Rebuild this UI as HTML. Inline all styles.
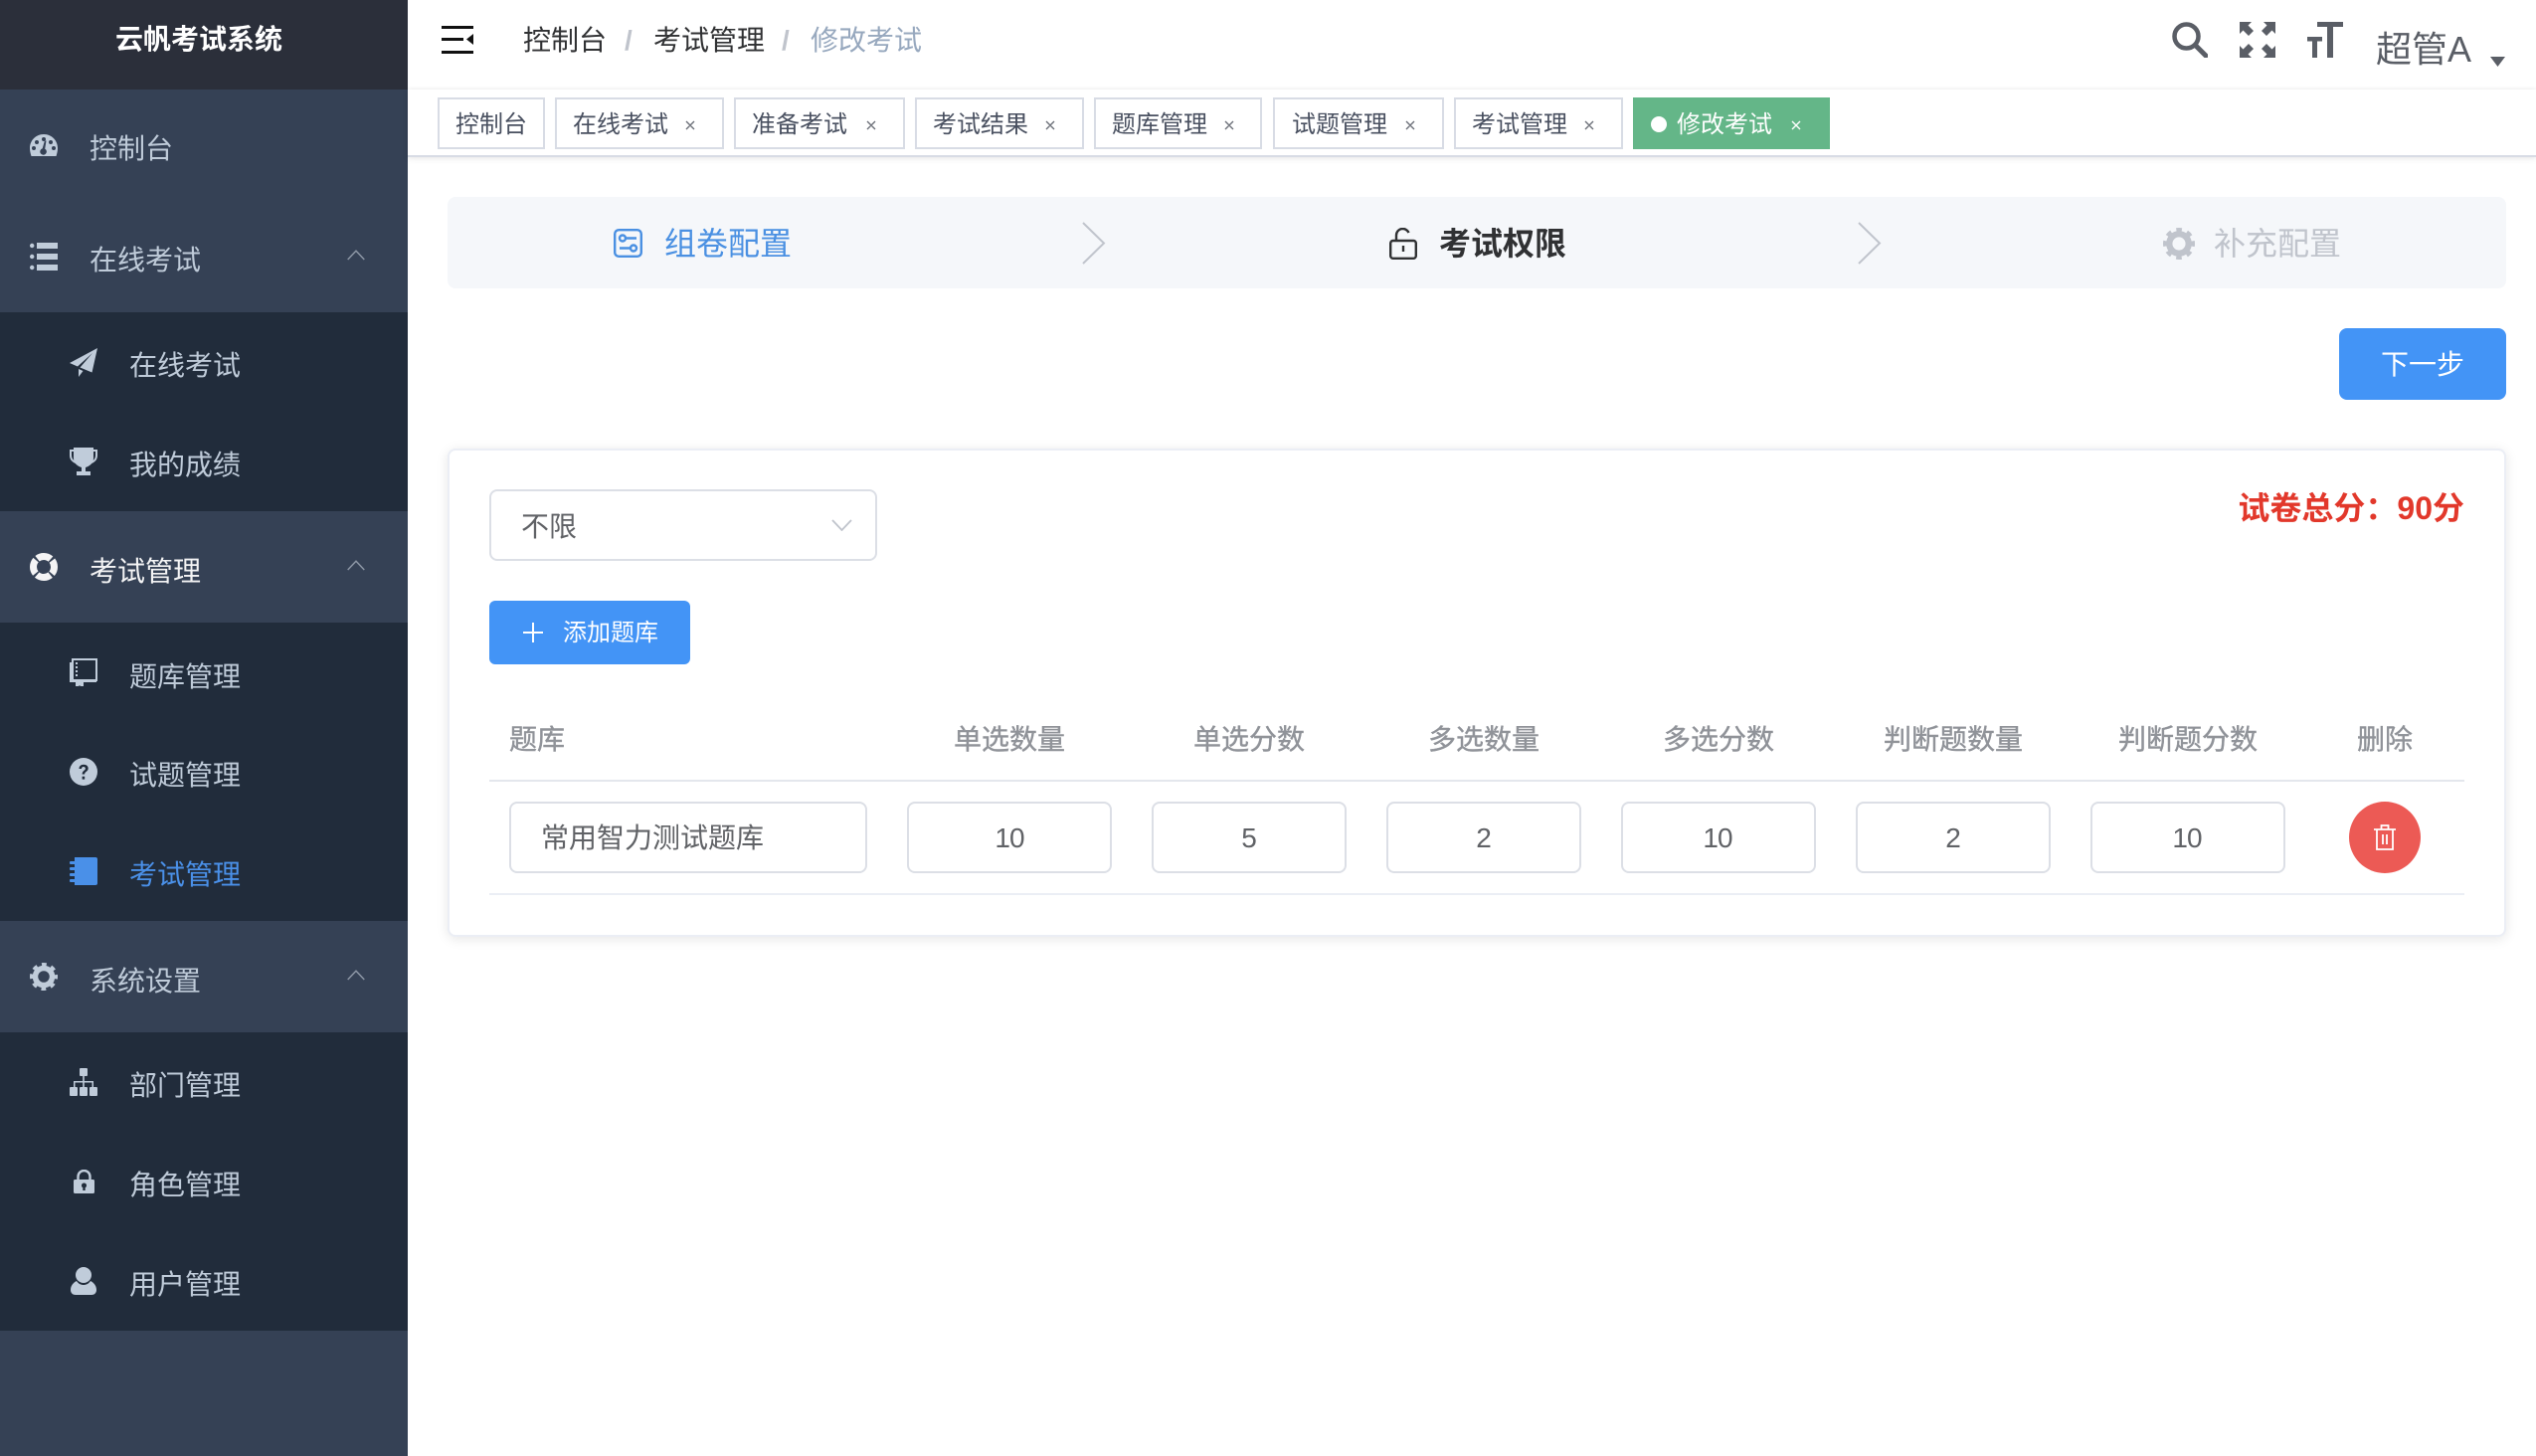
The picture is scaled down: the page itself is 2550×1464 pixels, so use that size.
<!DOCTYPE html>
<html lang="zh-CN"><head><meta charset="utf-8"><title>修改考试</title>
<style>
html,body{margin:0;padding:0;width:2550px;height:1464px;overflow:hidden;background:#fff}
body{position:relative;font-family:"Liberation Sans","Noto Sans CJK SC",sans-serif;color:#606266}
div,span,svg{position:absolute;box-sizing:border-box}
.t{white-space:nowrap;line-height:40px;height:40px;font-size:28px;margin-top:2px}
.c{transform:translateX(-50%)}
.s{color:#bfcbd9}
.tag{top:98px;height:52px;border:2px solid #d8dce5;background:#fff}
.tt{top:108px;font-size:24px;color:#495060;line-height:36px;height:36px;white-space:nowrap}
.inp{top:806px;height:72px;border:2px solid #dcdfe6;border-radius:8px;background:#fff}
.th{top:722px;color:#909399;-webkit-text-stroke:.4px #909399}
.v{top:821px;color:#606266}
</style></head><body>

<!-- sidebar -->
<div style="left:0;top:0;width:410px;height:1464px;background:#354155"></div>
<div style="left:0;top:0;width:410px;height:90px;background:#2b2f3a"></div>
<div style="left:0;top:314px;width:410px;height:200px;background:#212c3b"></div>
<div style="left:0;top:626px;width:410px;height:300px;background:#212c3b"></div>
<div style="left:0;top:1038px;width:410px;height:300px;background:#212c3b"></div>
<div class="t c" style="left:200px;top:18px;color:#fff;font-weight:700">云帆考试系统</div>

<svg style="left:30px;top:135px" width="28" height="22" viewBox="0 0 28 22"><path fill="#c0ccda" fill-rule="evenodd" d="M14 0C6 0 0 6.300 0 14c0 3 .8 5.800 1.500 8h25c.7-2.200 1.500-5 1.500-8C28 6.300 22 0 14 0zM14 3a2 2 0 1 1 0 4 2 2 0 0 1 0-4zM7 6a2 2 0 1 1 0 4 2 2 0 0 1 0-4zM21 6a2 2 0 1 1 0 4 2 2 0 0 1 0-4zM4 12a2 2 0 1 1 0 4 2 2 0 0 1 0-4zM24 12a2 2 0 1 1 0 4 2 2 0 0 1 0-4zM16.500 6.500l-1.300 8.100a3.300 3.300 0 1 1-2.500-.3l2.300-8.100z"/></svg>
<div class="t s" style="left:90px;top:128px">控制台</div>

<svg style="left:30px;top:244px" width="28" height="28" viewBox="0 0 28 28" fill="#c0ccda"><circle cx="2.200" cy="3" r="2.200"/><circle cx="2.200" cy="14" r="2.200"/><circle cx="2.200" cy="25" r="2.200"/><rect x="7" y="0" width="21" height="6"/><rect x="7" y="11" width="21" height="6"/><rect x="7" y="22" width="21" height="6"/></svg>
<div class="t s" style="left:90px;top:240px">在线考试</div>
<svg style="left:349px;top:251px" width="18" height="11" viewBox="0 0 18 11"><path d="M.7 10L9 1.200 17.300 10" fill="none" stroke="#8b95a4" stroke-width="1.500"/></svg>

<svg style="left:70px;top:350px" width="28" height="29" viewBox="0 0 28 29" fill="#c0ccda"><path d="M28 0L0 15l8 3.500L23 5 10.500 19.500l12 5z"/><path d="M9 21l0 8 4.500-6z"/></svg>
<div class="t s" style="left:130px;top:346px">在线考试</div>

<svg style="left:70px;top:450px" width="28" height="28" viewBox="0 0 28 28" fill="#c0ccda"><path d="M4 0h20v11c0 5-4.500 8-8 9v4h5v4H7v-4h5v-4C8.500 19 4 16 4 11z"/><path d="M4 3H1v5c0 4 3 6.500 6 7.500" fill="none" stroke="#c0ccda" stroke-width="2"/><path d="M24 3h3v5c0 4-3 6.500-6 7.500" fill="none" stroke="#c0ccda" stroke-width="2"/></svg>
<div class="t s" style="left:130px;top:446px">我的成绩</div>

<svg style="left:30px;top:556px" width="28" height="28" viewBox="0 0 28 28"><circle cx="14" cy="14" r="10.500" fill="none" stroke="#f4f4f5" stroke-width="7" stroke-dasharray="14.500 2" stroke-dashoffset="7.250"/></svg>
<div class="t" style="left:90px;top:553px;color:#f4f4f5">考试管理</div>
<svg style="left:349px;top:563px" width="18" height="11" viewBox="0 0 18 11"><path d="M.7 10L9 1.200 17.300 10" fill="none" stroke="#8b95a4" stroke-width="1.500"/></svg>

<svg style="left:70px;top:662px" width="28" height="28" viewBox="0 0 28 28" fill="none" stroke="#c0ccda" stroke-width="2"><path d="M3 21V1h24v21H3a2 2 0 0 0-2 2c0-1 0-2 0-20"/><path d="M1 23h26" /><path d="M7 4v14" stroke-dasharray="2 2"/><path d="M7 23v5l3-2 3 2v-5z" fill="#c0ccda"/></svg>
<div class="t s" style="left:130px;top:659px">题库管理</div>

<svg style="left:70px;top:762px" width="28" height="28" viewBox="0 0 28 28"><circle cx="14" cy="14" r="14" fill="#c0ccda"/><path d="M9.500 11c0-2.800 2-4.300 4.600-4.300 2.700 0 4.600 1.500 4.600 3.800 0 3.400-3.600 3.300-3.600 6h-2.500c0-3.700 3.300-3.800 3.300-5.800 0-1-.8-1.700-1.900-1.700-1.200 0-2 .8-2 2z" fill="#212c3b"/><rect x="12.600" y="18.700" width="2.600" height="2.900" fill="#212c3b"/></svg>
<div class="t s" style="left:130px;top:758px">试题管理</div>

<svg style="left:70px;top:862px" width="28" height="28" viewBox="0 0 28 28" fill="#4a90e8"><path d="M5 0h21a2 2 0 0 1 2 2v24a2 2 0 0 1-2 2H5z"/><rect x="0" y="4" width="7" height="3" rx="1"/><rect x="0" y="10" width="7" height="3" rx="1"/><rect x="0" y="16" width="7" height="3" rx="1"/><rect x="0" y="22" width="7" height="3" rx="1"/></svg>
<div class="t" style="left:130px;top:858px;color:#4a90e8">考试管理</div>

<svg style="left:30px;top:968px" width="28" height="28" viewBox="0 0 28 28"><circle cx="14" cy="14" r="8.500" fill="none" stroke="#c0ccda" stroke-width="5.500"/><circle cx="14" cy="14" r="12" fill="none" stroke="#c0ccda" stroke-width="4" stroke-dasharray="4.700 4.725" stroke-dashoffset="2.350"/></svg>
<div class="t s" style="left:90px;top:965px">系统设置</div>
<svg style="left:349px;top:975px" width="18" height="11" viewBox="0 0 18 11"><path d="M.7 10L9 1.200 17.300 10" fill="none" stroke="#8b95a4" stroke-width="1.500"/></svg>

<svg style="left:70px;top:1074px" width="28" height="28" viewBox="0 0 28 28" fill="#c0ccda"><rect x="10" y="0" width="8" height="8" rx="1"/><rect x="0" y="19" width="8" height="9" rx="1"/><rect x="10" y="19" width="8" height="9" rx="1"/><rect x="20" y="19" width="8" height="9" rx="1"/><path d="M13.200 8h1.600v5H24v6h-1.500v-4.500H5.500V19H4v-6h9.200zM13.200 14h1.600v5h-1.600z"/></svg>
<div class="t s" style="left:130px;top:1070px">部门管理</div>

<svg style="left:74px;top:1176px" width="21" height="24" viewBox="0 0 21 24"><path d="M4.500 11V7a6 6 0 0 1 12 0v4" fill="none" stroke="#c0ccda" stroke-width="2.400"/><path fill="#c0ccda" fill-rule="evenodd" d="M1.500 10h18A1.500 1.500 0 0 1 21 11.500v11a1.500 1.500 0 0 1-1.500 1.500h-18A1.500 1.500 0 0 1 0 22.500v-11A1.500 1.500 0 0 1 1.500 10zM10.500 13.500a2.500 2.500 0 0 0-1.200 4.700V21h2.400v-2.800a2.500 2.500 0 0 0-1.200-4.700z"/></svg>
<div class="t s" style="left:130px;top:1170px">角色管理</div>

<svg style="left:71px;top:1274px" width="26" height="28" viewBox="0 0 26 28" fill="#c0ccda"><ellipse cx="13" cy="8" rx="8" ry="8"/><path d="M6 14c2 3 4.500 4 7 4s5-1 7-4c3 1.500 6 4.500 6 9 0 3-2 5-5 5H5c-3 0-5-2-5-5 0-4.500 3-7.500 6-9z"/></svg>
<div class="t s" style="left:130px;top:1270px">用户管理</div>

<!-- navbar -->
<svg style="left:444px;top:26px" width="32" height="28" viewBox="0 0 32 28" fill="#111"><rect x="0" y="0" width="32" height="3"/><rect x="0" y="12" width="22" height="3"/><rect x="0" y="25" width="32" height="3"/><path d="M32 8v11l-7-5.500z"/></svg>
<div class="t" style="left:526px;top:19px;color:#303133">控制台</div>
<div class="t" style="left:628px;top:19px;color:#c0c4cc;font-weight:700">/</div>
<div class="t" style="left:657px;top:19px;color:#303133">考试管理</div>
<div class="t" style="left:786px;top:19px;color:#c0c4cc;font-weight:700">/</div>
<div class="t" style="left:815px;top:19px;color:#97a8be">修改考试</div>

<svg style="left:2184px;top:22px" width="36" height="36" viewBox="0 0 36 36" fill="none" stroke="#5a5e66"><circle cx="14.500" cy="14.500" r="12" stroke-width="4.500"/><path d="M23.500 23.500L34 34" stroke-width="5" stroke-linecap="round"/></svg>
<svg style="left:2252px;top:22px" width="36" height="36" viewBox="0 0 36 36" fill="#5a5e66"><path d="M0 0h12L8.500 3.500 14 9l-5 5-5.500-5.500L0 12zM36 0H24l3.500 3.500L22 9l5 5 5.500-5.500L36 12zM0 36h12l-3.500-3.500L14 27l-5-5-5.500 5.500L0 24zM36 36H24l3.500-3.500L22 27l5-5 5.500 5.500L36 24z"/></svg>
<svg style="left:2320px;top:22px" width="36" height="36" viewBox="0 0 36 36" fill="#5a5e66"><path d="M10 0h26v5h-10v31h-6V5H10zM0 15h15v4.500h-5V36H5V19.500H0z"/></svg>
<div class="t" style="left:2389px;top:26px;height:44px;line-height:44px;font-size:36px;color:#5a5e66">超管A</div>
<svg style="left:2504px;top:57px" width="15" height="10" viewBox="0 0 15 10"><path d="M0 0h15L7.500 10z" fill="#5a5e66"/></svg>

<!-- tags bar -->
<div style="left:410px;top:90px;width:2140px;height:68px;background:#fff;border-bottom:2px solid #d8dce5;box-shadow:0 2px 6px rgba(0,0,0,.08),0 -1px 4px rgba(0,0,0,.05)"></div>
<div class="tag" style="left:440px;width:108px"></div><div class="tt" style="left:458px">控制台</div>
<div class="tag" style="left:558px;width:170px"></div><div class="tt" style="left:576px">在线考试</div>
<div class="tag" style="left:738px;width:172px"></div><div class="tt" style="left:756px">准备考试</div>
<div class="tag" style="left:920px;width:170px"></div><div class="tt" style="left:938px">考试结果</div>
<div class="tag" style="left:1100px;width:169px"></div><div class="tt" style="left:1118px">题库管理</div>
<div class="tag" style="left:1280px;width:172px"></div><div class="tt" style="left:1299px">试题管理</div>
<div class="tag" style="left:1462px;width:170px"></div><div class="tt" style="left:1480px">考试管理</div>
<div class="tag" style="left:1642px;width:198px;background:#64b688;border-color:#64b688"></div>
<div style="left:1660px;top:117px;width:16px;height:16px;border-radius:50%;background:#fff"></div>
<div class="tt" style="left:1686px;color:#fff">修改考试</div>
<svg style="left:0;top:0" width="2550" height="160" viewBox="0 0 2550 160" fill="none" stroke-width="1.400"><g stroke="#6b6f78"><path d="M690 122l8 8M698 122l-8 8M872 122l8 8M880 122l-8 8M1052 122l8 8M1060 122l-8 8M1232 122l8 8M1240 122l-8 8M1414 122l8 8M1422 122l-8 8M1594 122l8 8M1602 122l-8 8"/></g><path stroke="#fff" d="M1802 122l8 8M1810 122l-8 8"/></svg>

<!-- steps -->
<div style="left:450px;top:198px;width:2070px;height:92px;background:#f5f7fa;border-radius:8px"></div>
<svg style="left:617px;top:230px" width="29" height="29" viewBox="0 0 29 29" fill="none" stroke="#4a90e2" stroke-width="2.400"><rect x="1.200" y="1.200" width="26.600" height="26.600" rx="4"/><circle cx="9" cy="9.500" r="3"/><path d="M12 9.500h11M6 19.500h11"/><circle cx="20" cy="19.500" r="3"/></svg>
<div class="t" style="left:668px;top:223px;font-size:32px;color:#4a90e2">组卷配置</div>
<svg style="left:1088px;top:223px" width="24" height="43" viewBox="0 0 24 43"><path d="M1 1l21 20.500L1 42" fill="none" stroke="#c0c4cc" stroke-width="2"/></svg>
<svg style="left:1397px;top:229px" width="28" height="32" viewBox="0 0 28 32" fill="none" stroke="#303133" stroke-width="2.400"><path d="M7 13V7.500A6.500 6.500 0 0 1 19.500 5"/><rect x="1.200" y="13" width="25.600" height="17.800" rx="2.500"/><path d="M14 18v6"/></svg>
<div class="t" style="left:1447px;top:223px;font-size:32px;font-weight:700;color:#303133">考试权限</div>
<svg style="left:1868px;top:223px" width="24" height="43" viewBox="0 0 24 43"><path d="M1 1l21 20.500L1 42" fill="none" stroke="#c0c4cc" stroke-width="2"/></svg>
<svg style="left:2175px;top:229px" width="32" height="32" viewBox="0 0 28 28"><circle cx="14" cy="14" r="8.500" fill="none" stroke="#c0c4cc" stroke-width="5.500"/><circle cx="14" cy="14" r="12" fill="none" stroke="#c0c4cc" stroke-width="4" stroke-dasharray="4.700 4.725" stroke-dashoffset="2.350"/></svg>
<div class="t" style="left:2226px;top:223px;font-size:32px;color:#c0c4cc">补充配置</div>

<!-- next -->
<div style="left:2352px;top:330px;width:168px;height:72px;background:#4394f6;border-radius:8px"></div>
<div class="t c" style="left:2436px;top:345px;color:#fff">下一步</div>

<!-- card -->
<div style="left:450px;top:451px;width:2070px;height:491px;border:2px solid #ebeef5;border-radius:8px;background:#fff;box-shadow:0 2px 12px rgba(0,0,0,.1)"></div>

<div class="inp" style="left:492px;top:492px;width:390px;height:72px"></div>
<div class="t" style="left:524px;top:508px">不限</div>
<svg style="left:836px;top:522px" width="21" height="12" viewBox="0 0 21 12"><path d="M1 1l9.500 10L20 1" fill="none" stroke="#c0c4cc" stroke-width="1.800"/></svg>

<div style="left:492px;top:604px;width:202px;height:64px;background:#4394f6;border-radius:6px"></div>
<svg style="left:526px;top:626px" width="20" height="20" viewBox="0 0 20 20"><path d="M10 0v20M0 10h20" stroke="#fff" stroke-width="2"/></svg>
<div class="t" style="left:566px;top:615px;font-size:24px;color:#fff">添加题库</div>

<div class="t" style="right:72px;top:489px;font-size:32px;font-weight:700;color:#e2382b">试卷总分：90分</div>

<div class="t th" style="left:512px">题库</div>
<div class="t th c" style="left:1015px">单选数量</div>
<div class="t th c" style="left:1256px">单选分数</div>
<div class="t th c" style="left:1492px">多选数量</div>
<div class="t th c" style="left:1728px">多选分数</div>
<div class="t th c" style="left:1964px">判断题数量</div>
<div class="t th c" style="left:2200px">判断题分数</div>
<div class="t th c" style="left:2398px">删除</div>
<div style="left:492px;top:784px;width:1986px;height:2px;background:#e4e7ed"></div>
<div style="left:492px;top:898px;width:1986px;height:2px;background:#ebeef5"></div>

<div class="inp" style="left:512px;width:360px"></div>
<div class="t v" style="left:544px">常用智力测试题库</div>
<div class="inp" style="left:912px;width:206px"></div><div class="t v c" style="left:1015px;letter-spacing:-1px">10</div>
<div class="inp" style="left:1158px;width:196px"></div><div class="t v c" style="left:1256px">5</div>
<div class="inp" style="left:1394px;width:196px"></div><div class="t v c" style="left:1492px">2</div>
<div class="inp" style="left:1630px;width:196px"></div><div class="t v c" style="left:1727px;letter-spacing:-1px">10</div>
<div class="inp" style="left:1866px;width:196px"></div><div class="t v c" style="left:1964px">2</div>
<div class="inp" style="left:2102px;width:196px"></div><div class="t v c" style="left:2199px;letter-spacing:-1px">10</div>
<div style="left:2362px;top:806px;width:72px;height:72px;border-radius:50%;background:#ec5a55"></div>
<svg style="left:2386px;top:829px" width="24" height="26" viewBox="0 0 24 26" fill="none" stroke="#fff" stroke-width="1.800"><path d="M1 5h22M8.500 5V1h7v4M4 5v20h16V5M10 10v10M14 10v10"/></svg>

</body></html>
